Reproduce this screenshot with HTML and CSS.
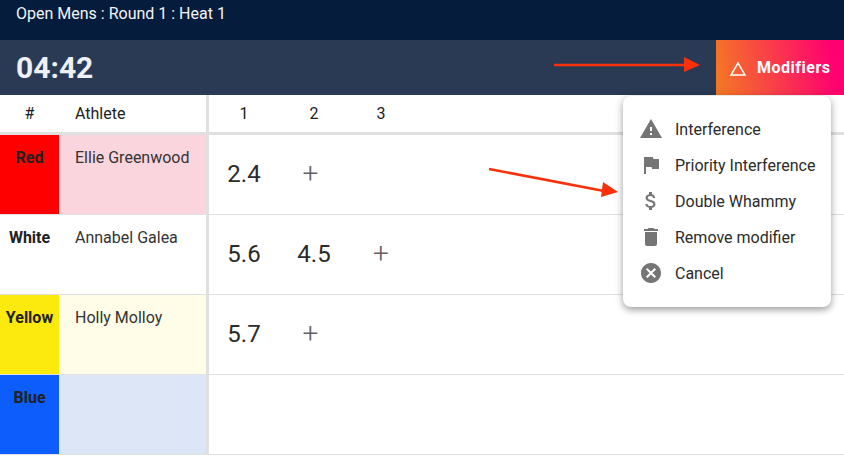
FILE: index.html
```html
<!DOCTYPE html>
<html lang="en">
<head>
    <meta charset="UTF-8">
    <meta name="viewport" content="width=device-width, initial-scale=1.0">
    <title>Open Mens : Round 1 : Heat 1</title>
    <link rel="stylesheet" href="styles.css">
</head>
<body>
    <div class="title-bar">Open Mens : Round 1 : Heat 1</div>

    <div class="timer-bar">
        <div class="timer">04:42</div>
        <button class="modifiers-button">
            <svg class="modifiers-icon" viewBox="0 0 24 24"><path fill="#fff" d="M12 5.99 19.53 19H4.47L12 5.99M12 2 1 21h22L12 2z"/></svg>
            Modifiers
        </button>
    </div>

    <div class="heat-table">
        <div class="side-col">
            <div class="head-row side-grid">
                <div class="head-hash">#</div>
                <div class="head-athlete">Athlete</div>
            </div>
            <div class="side-grid athlete-row tint-red">
                <div class="jersey jersey-red">Red</div>
                <div class="athlete-name">Ellie Greenwood</div>
            </div>
            <div class="side-grid athlete-row">
                <div class="jersey">White</div>
                <div class="athlete-name">Annabel Galea</div>
            </div>
            <div class="side-grid athlete-row tint-yellow">
                <div class="jersey jersey-yellow">Yellow</div>
                <div class="athlete-name">Holly Molloy</div>
            </div>
            <div class="side-grid athlete-row tint-blue">
                <div class="jersey jersey-blue">Blue</div>
                <div class="athlete-name"></div>
            </div>
        </div>

        <div class="score-col">
            <div class="head-row score-grid">
                <div class="wave-num">1</div>
                <div class="wave-num">2</div>
                <div class="wave-num">3</div>
            </div>
            <div class="score-row score-grid">
                <div class="score">2.4</div>
                <div class="score add add-near">+</div>
            </div>
            <div class="score-row score-grid">
                <div class="score">5.6</div>
                <div class="score">4.5</div>
                <div class="score add">+</div>
            </div>
            <div class="score-row score-grid">
                <div class="score">5.7</div>
                <div class="score add add-near">+</div>
            </div>
            <div class="score-row score-grid"></div>
        </div>
    </div>

    <div class="modifier-menu">
        <div class="menu-item">
            <svg class="menu-icon" viewBox="0 0 24 24"><path d="M1 21h22L12 2 1 21zm12-3h-2v-2h2v2zm0-4h-2v-4h2v4z"/></svg>
            Interference
        </div>
        <div class="menu-item">
            <svg class="menu-icon" viewBox="0 0 24 24"><path d="M14.4 6 14 4H5v17h2v-7h5.6l.4 2h7V6z"/></svg>
            Priority Interference
        </div>
        <div class="menu-item">
            <svg class="menu-icon" viewBox="0 0 24 24"><path d="M11.8 10.9c-2.27-.59-3-1.2-3-2.15 0-1.09 1.01-1.85 2.7-1.85 1.78 0 2.44.85 2.5 2.1h2.21c-.07-1.72-1.12-3.3-3.21-3.81V3h-3v2.16c-1.94.42-3.5 1.68-3.5 3.61 0 2.31 1.91 3.46 4.7 4.13 2.5.6 3 1.48 3 2.41 0 .69-.49 1.79-2.7 1.79-2.06 0-2.87-.92-2.98-2.1h-2.2c.12 2.19 1.76 3.42 3.68 3.83V21h3v-2.15c1.95-.37 3.5-1.5 3.5-3.55 0-2.84-2.43-3.81-4.7-4.4z"/></svg>
            Double Whammy
        </div>
        <div class="menu-item">
            <svg class="menu-icon" viewBox="0 0 24 24"><path d="M6 19c0 1.1.9 2 2 2h8c1.1 0 2-.9 2-2V7H6v12zM19 4h-3.5l-1-1h-5l-1 1H5v2h14V4z"/></svg>
            Remove modifier
        </div>
        <div class="menu-item">
            <svg class="menu-icon" viewBox="0 0 24 24"><path d="M12 2C6.47 2 2 6.47 2 12s4.47 10 10 10 10-4.47 10-10S17.53 2 12 2zm5 13.59L15.59 17 12 13.41 8.41 17 7 15.59 10.59 12 7 8.41 8.41 7 12 10.59 15.59 7 17 8.41 13.41 12 17 15.59z"/></svg>
            Cancel
        </div>
    </div>

    <!-- annotation arrows drawn over the screenshot -->
    <svg class="arrow-layer" viewBox="0 0 844 457">
        <path class="arrow-line" d="M554 65H686"/>
        <path class="arrow-head" d="M684 57L700 65L684 72z"/>
        <path class="arrow-line" d="M489 169L604 191"/>
        <path class="arrow-head" d="M603 182L618 192L601 197z"/>
    </svg>
</body>
</html>
```

FILE: styles.css
```css
* {
    box-sizing: border-box;
}
body {
    margin: 0;
    height: 457px;
    overflow: hidden;
    position: relative;
    background: #fff;
    color: #212121;
    font-family: Roboto, "Liberation Sans", sans-serif;
    font-size: 16px;
}
.title-bar {
    height: 40px;
    padding: 5px 16px 0;
    background: #061c3c;
    color: #f2f4f7;
    line-height: 18px;
}
.timer-bar {
    height: 55px;
    display: flex;
    justify-content: space-between;
    align-items: center;
    padding-left: 16px;
    background: #2a3a55;
}
.timer {
    color: #eef0f4;
    font-size: 30px;
    font-weight: 700;
}
.modifiers-button {
    width: 128px;
    height: 55px;
    display: flex;
    align-items: center;
    gap: 10px;
    padding: 0 0 0 13px;
    border: 0;
    background: linear-gradient(80deg, #f47526 4%, #ff0070 90%);
    color: #fff;
    font-family: inherit;
    font-size: 16px;
    font-weight: 700;
    letter-spacing: 0.5px;
}
.modifiers-icon {
    width: 18px;
    height: 18px;
    margin-top: 2px;
}
.heat-table {
    display: flex;
}
.side-col {
    width: 209px;
    border-right: 3px solid #e0e0e0;
}
.score-col {
    flex: 1;
}
.head-row {
    height: 40px;
    border-bottom: 3px solid #e0e0e0;
    line-height: 37px;
}
.side-grid {
    display: grid;
    grid-template-columns: 59px 1fr;
}
.head-hash {
    text-align: center;
}
.head-athlete {
    padding-left: 16px;
}
.athlete-row {
    height: 80px;
    border-bottom: 1px solid #e0e0e0;
}
.jersey {
    padding-top: 14px;
    text-align: center;
    font-weight: 700;
    line-height: 18px;
}
.jersey-red {
    background: #ff0000;
}
.jersey-yellow {
    background: #fcea0e;
}
.jersey-blue {
    background: #0c5dfb;
}
.athlete-name {
    padding: 14px 0 0 16px;
    line-height: 18px;
    color: #333;
}
.tint-red {
    background: #fad5dd;
}
.tint-yellow {
    background: #fffde8;
}
.tint-blue {
    background: #dce6f7;
}
.score-grid {
    display: grid;
    grid-template-columns: 70px 70px 64px;
}
.wave-num {
    text-align: center;
}
.score-row {
    height: 80px;
    border-bottom: 1px solid #e0e0e0;
    align-items: center;
}
.score {
    padding-bottom: 2px;
    text-align: center;
    font-size: 24px;
    color: #2b2b2b;
}
.add {
    color: #616161;
    font-size: 28px;
    font-weight: 300;
}
.add-near {
    padding-right: 7px;
}
.modifier-menu {
    position: absolute;
    left: 623px;
    top: 96px;
    width: 208px;
    height: 211px;
    padding: 15px 0;
    background: #fff;
    border-radius: 8px;
    box-shadow: 0 3px 6px rgba(0, 0, 0, 0.3), 0 1px 12px rgba(0, 0, 0, 0.12);
}
.menu-item {
    height: 36px;
    display: flex;
    align-items: center;
    gap: 12px;
    padding-left: 16px;
    color: #2b2b2b;
}
.menu-icon {
    width: 24px;
    height: 24px;
    flex: none;
    fill: #757575;
}
.arrow-layer {
    position: absolute;
    left: 0;
    top: 0;
    width: 844px;
    height: 457px;
    pointer-events: none;
}
.arrow-line {
    fill: none;
    stroke: #f9300a;
    stroke-width: 2.5;
}
.arrow-head {
    fill: #f9300a;
}
```
